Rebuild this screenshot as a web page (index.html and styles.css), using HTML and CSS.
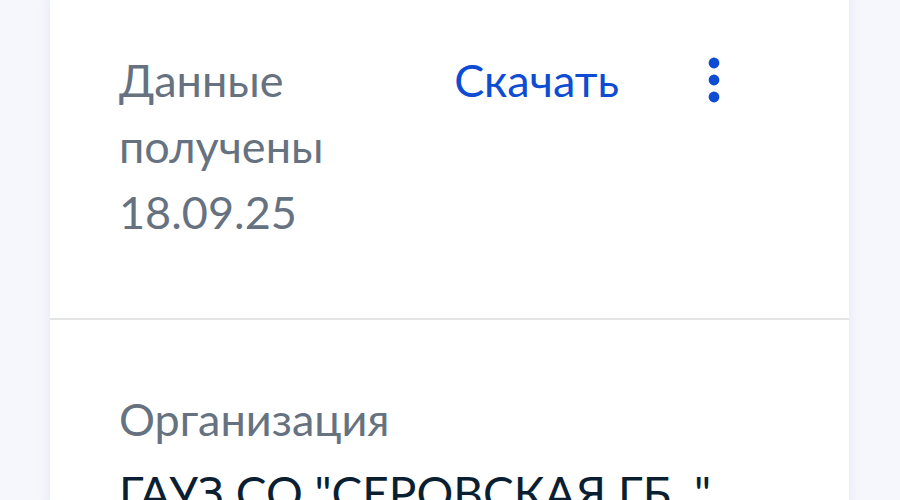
FILE: index.html
```html
<!DOCTYPE html>
<html lang="ru">
<head>
<meta charset="utf-8">
<link rel="stylesheet" href="styles.css">
</head>
<body>
<div class="page">
  <div class="card">
    <div class="section head">
      <div class="status">Данные получены 18.09.25</div>
      <a class="download">Скачать</a>
      <button class="more" aria-label="Ещё">
        <svg width="12" height="46" viewBox="0 0 12 46"><circle cx="6" cy="6" r="5.4" fill="#0d4cd3"/><circle cx="6" cy="23" r="5.4" fill="#0d4cd3"/><circle cx="6" cy="40" r="5.4" fill="#0d4cd3"/></svg>
      </button>
    </div>
    <div class="divider"></div>
    <div class="section info">
      <div class="label">Организация</div>
      <div class="value">ГАУЗ СО "СЕРОВСКАЯ ГБ. "</div>
    </div>
  </div>
</div>
</body>
</html>
```
FILE: styles.css
```css
html, body {
  margin: 0;
  padding: 0;
  background: #f5f7fc;
  font-family: Lato, "Noto Sans", sans-serif;
  overflow: hidden;
}
.page {
  padding: 0 51px 0 50px;
}
.card {
  margin-top: -24px;
  background: #ffffff;
  border-radius: 24px;
  box-shadow: 0 0 14px rgba(120, 140, 210, 0.14);
}
.section {
  padding-left: 69px;
  padding-right: 111px;
}
.head {
  display: flex;
  align-items: flex-start;
  padding-top: 71px;
  padding-bottom: 73px;
}
.status {
  flex: 1;
  max-width: 300px;
  margin-right: auto;
  font-size: 45px;
  line-height: 66px;
  color: #66727f;
}
.download {
  font-size: 45px;
  line-height: 66px;
  color: #0d4cd3;
  text-decoration: none;
}
.more {
  width: 48px;
  height: 66px;
  margin-left: 71px;
  padding: 0;
  border: 0;
  background: none;
  display: flex;
  align-items: center;
  justify-content: center;
}
.more svg { display: block; }
.divider {
  height: 2px;
  background: #e3e4e6;
}
.info {
  padding-top: 66px;
}
.label {
  font-size: 45px;
  line-height: 66px;
  color: #66727f;
}
.value {
  margin-top: 8px;
  font-size: 46px;
  line-height: 66px;
  color: #0b1f33;
  white-space: nowrap;
}
```
